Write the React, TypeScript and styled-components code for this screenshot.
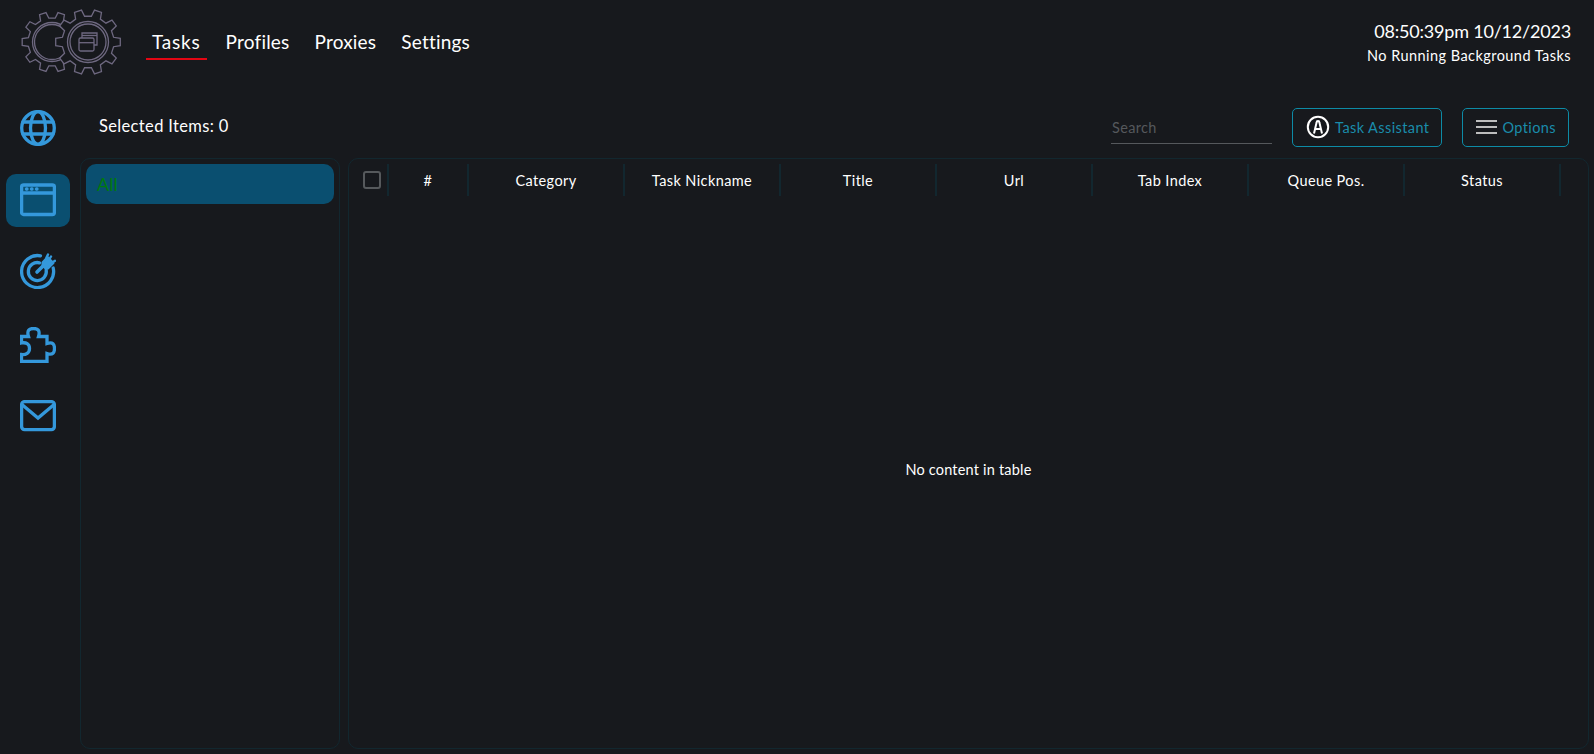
import styled, { createGlobalStyle } from "styled-components";

const GlobalStyle = createGlobalStyle`
  html, body {
    margin: 0;
    height: 100%;
    overflow: hidden;
    background: #17191d;
  }
  #root {
    height: 100%;
  }
  * {
    box-sizing: border-box;
  }
`;

const gearPath = (cx: number, cy: number, teeth: number, outer: number, inner: number) => {
  const points: string[] = [];
  const step = (Math.PI * 2) / teeth;
  for (let i = 0; i < teeth; i++) {
    const a = (i + 0.5) * step - Math.PI / 2;
    const corners: [number, number][] = [
      [inner, a - step * 0.29],
      [outer, a - step * 0.18],
      [outer, a + step * 0.18],
      [inner, a + step * 0.29],
    ];
    corners.forEach(([r, t]) => {
      points.push(`${(cx + r * Math.cos(t)).toFixed(2)} ${(cy + r * Math.sin(t)).toFixed(2)}`);
    });
  }
  return `M${points.join("L")}Z`;
};

const Logo = () => (
  <svg width="104" height="68" viewBox="0 0 104 68" fill="none" stroke="#6e6880" strokeWidth="1.3">
    <path d={gearPath(31, 34, 10, 30, 24)} />
    <circle cx="31" cy="34" r="19.5" />
    <circle cx="31" cy="34" r="17.5" />
    <path d={gearPath(67, 34, 10, 32.5, 26)} fill="#17191d" />
    <circle cx="67" cy="34" r="20.5" />
    <circle cx="67" cy="34" r="18" />
    <rect x="58" y="30" width="15" height="13" rx="1.5" />
    <path d="M58 34.7H73" />
    <path d="M61 30V25H76V37H73" />
    <path d="M61 27.5H76" />
  </svg>
);

const SideIcon = styled.svg.attrs({
  width: 36,
  height: 36,
  viewBox: "0 0 36 36",
  fill: "none",
})`
  stroke: #3498db;
  stroke-width: 3.3;
  stroke-linejoin: round;
  stroke-linecap: round;
`;

const GlobeIcon = () => (
  <SideIcon>
    <circle cx="18" cy="18" r="16.3" />
    <ellipse cx="18" cy="18" rx="7.5" ry="16.3" />
    <path d="M3 12H33M3 24H33" />
  </SideIcon>
);

const BrowserIcon = () => (
  <SideIcon>
    <rect x="1.6" y="2" width="32.8" height="29.5" rx="2" />
    <path d="M2 10H34" />
    <path d="M6.5 6H7M11.5 6H12M16.5 6H17" />
  </SideIcon>
);

const TargetIcon = () => (
  <SideIcon>
    <path d="M20.5 2.8A16 16 0 1 0 33.2 15" />
    <path d="M19.5 9.8A9 9 0 1 0 26.2 17" />
    <path d="M17 19L24.5 11.5" strokeWidth="3.6" />
    <path
      d="M22.5 9.5L27.5 4L33.5 10L28 15.5H25.5L22.5 12.5Z"
      fill="#3498db"
      strokeWidth="2"
    />
    <path d="M26.5 4.5L28 1.5M31 3.5L29.5 6M33 9L35 7.8" strokeWidth="2.4" />
  </SideIcon>
);

const PuzzleIcon = () => (
  <SideIcon>
    <path
      d="M1.5 9.5H8.5C6.5 3 9.5 1.5 13.5 1.5C17.5 1.5 20.5 3 18.5 9.5H27V16.5C33 14.5 34.5 17.5 34.5 21.5C34.5 25.5 33 28.5 27 26.5V34.5H1.5V27.5C6 28 9.5 26 9.5 21.5C9.5 17 6 15 1.5 16Z"
      strokeLinejoin="miter"
    />
  </SideIcon>
);

const MailIcon = () => (
  <SideIcon>
    <rect x="1.6" y="1.6" width="32.8" height="28" rx="3" />
    <path d="M2.5 5L18 18L33.5 5" strokeLinejoin="miter" />
  </SideIcon>
);

const AssistantIcon = () => (
  <svg width="24" height="24" viewBox="0 0 24 24" fill="none" stroke="#fff" strokeWidth="2">
    <circle cx="12" cy="12" r="10.2" />
    <path d="M8 18.5L10.6 7.5a1.4 1.4 0 0 1 2.8 0L16 18.5M9 14H15" />
  </svg>
);

const MenuIcon = () => (
  <svg width="21" height="16" viewBox="0 0 21 16" stroke="#bdbdbd" strokeWidth="2.2">
    <path d="M0 2H21M0 8H21M0 14H21" />
  </svg>
);

const Page = styled.div`
  height: 100%;
  display: flex;
  flex-direction: column;
  background: #17191d;
  color: #fff;
  font-family: Lato, "Open Sans", sans-serif;
`;

const Header = styled.header`
  height: 90px;
  flex: none;
  display: flex;
  align-items: flex-start;
  padding: 8px 23px 0 21px;
`;

const Nav = styled.nav`
  display: flex;
  gap: 13px;
  margin: 21px 0 0 21px;
`;

const NavLink = styled.a<{ $active?: boolean }>`
  padding: 0 6px 3px;
  font-size: 19px;
  line-height: 26px;
  letter-spacing: ${(p) => (p.$active ? "0.8px" : "0.2px")};
  color: #fff;
  border-bottom: 2px solid ${(p) => (p.$active ? "#e30613" : "transparent")};
`;

const Clock = styled.div`
  margin-left: auto;
  padding-top: 12px;
  text-align: right;
`;

const Time = styled.div`
  font-size: 18px;
  line-height: 22px;
  letter-spacing: -0.2px;
`;

const Background = styled.div`
  font-size: 14.5px;
  line-height: 20px;
  margin-top: 4px;
  letter-spacing: 0.45px;
`;

const Body = styled.div`
  flex: 1;
  min-height: 0;
  display: flex;
  padding-bottom: 5px;
`;

const Sidebar = styled.aside`
  width: 80px;
  flex: none;
  display: flex;
  flex-direction: column;
  align-items: flex-start;
  padding: 11px 0 0 6px;
`;

const SideButton = styled.div<{ $active?: boolean; $gap: number }>`
  width: 64px;
  height: 53px;
  margin-bottom: ${(p) => p.$gap}px;
  display: flex;
  align-items: center;
  justify-content: center;
  border-radius: 10px;
  background: ${(p) => (p.$active ? "#0a4f70" : "transparent")};
`;

const Main = styled.main`
  flex: 1;
  min-width: 0;
  display: flex;
  flex-direction: column;
  padding-right: 5px;
`;

const Toolbar = styled.div`
  height: 68px;
  flex: none;
  display: flex;
  align-items: center;
  padding: 6px 20px 0 19px;
`;

const Selected = styled.div`
  font-size: 16.5px;
  letter-spacing: 0.35px;
  margin-top: -2px;
`;

const Search = styled.input`
  width: 161px;
  height: 30px;
  margin: 4px 0 0 auto;
  padding: 0 1px 2px;
  background: none;
  border: 0;
  border-bottom: 1px solid #55585c;
  color: #fff;
  font: 14.5px Lato, sans-serif;
  letter-spacing: 0.3px;
  outline: none;

  &::placeholder {
    color: #55585c;
    opacity: 1;
  }
`;

const ToolButton = styled.div<{ $inset: number; $space: number }>`
  height: 39px;
  margin-left: ${(p) => p.$space}px;
  display: flex;
  align-items: center;
  gap: 5px;
  padding: 0 12px 0 ${(p) => p.$inset}px;
  border: 1px solid #0d8ba6;
  border-radius: 5px;
  color: #1a8cab;
  font-size: 14.5px;
  letter-spacing: 0.4px;
`;

const Panels = styled.div`
  flex: 1;
  min-height: 0;
  display: flex;
  gap: 8px;
`;

const Panel = styled.section`
  border: 1px solid #12272f;
  border-radius: 10px;
`;

const Categories = styled(Panel)`
  width: 260px;
  flex: none;
  padding: 5px;
`;

const CategoryItem = styled.div`
  height: 40px;
  display: flex;
  align-items: center;
  padding: 0 11px;
  border-radius: 10px;
  background: #0a4f70;
  color: #007a0e;
  font-size: 18px;
`;

const TablePanel = styled(Panel)`
  flex: 1;
  min-width: 0;
  display: flex;
  flex-direction: column;
`;

const TableHead = styled.div`
  flex: none;
  display: grid;
  grid-template-columns: 40px 80px repeat(7, 156px);
  margin-top: 5px;
`;

const HeadCell = styled.div`
  height: 32px;
  display: flex;
  align-items: center;
  justify-content: center;
  border-right: 2px solid #12272f;
  font-size: 14.5px;
  letter-spacing: 0.4px;
`;

const CheckBox = styled.span`
  width: 18px;
  height: 18px;
  margin-left: 7px;
  border: 2px solid #56595c;
  border-radius: 3px;
`;

const EmptyRow = styled.div`
  flex: 1;
  display: flex;
  align-items: center;
  justify-content: center;
  padding-bottom: 5px;
  font-size: 14.5px;
  letter-spacing: 0.2px;
`;

const columns = ["#", "Category", "Task Nickname", "Title", "Url", "Tab Index", "Queue Pos.", "Status"];

const App = () => {
  return (
    <Page>
      <GlobalStyle />
      <Header>
        <Logo />
        <Nav>
          <NavLink $active>Tasks</NavLink>
          <NavLink>Profiles</NavLink>
          <NavLink>Proxies</NavLink>
          <NavLink>Settings</NavLink>
        </Nav>
        <Clock>
          <Time>08:50:39pm 10/12/2023</Time>
          <Background>No Running Background Tasks</Background>
        </Clock>
      </Header>
      <Body>
        <Sidebar>
          <SideButton $gap={20}><GlobeIcon /></SideButton>
          <SideButton $active $gap={17}><BrowserIcon /></SideButton>
          <SideButton $gap={21}><TargetIcon /></SideButton>
          <SideButton $gap={20}><PuzzleIcon /></SideButton>
          <SideButton $gap={0}><MailIcon /></SideButton>
        </Sidebar>
        <Main>
          <Toolbar>
            <Selected>Selected Items: 0</Selected>
            <Search placeholder="Search" />
            <ToolButton $inset={13} $space={20}><AssistantIcon />Task Assistant</ToolButton>
            <ToolButton $inset={13} $space={20}><MenuIcon />Options</ToolButton>
          </Toolbar>
          <Panels>
            <Categories>
              <CategoryItem>All</CategoryItem>
            </Categories>
            <TablePanel>
              <TableHead>
                <HeadCell><CheckBox /></HeadCell>
                {columns.map((name) => (
                  <HeadCell key={name}>{name}</HeadCell>
                ))}
              </TableHead>
              <EmptyRow>No content in table</EmptyRow>
            </TablePanel>
          </Panels>
        </Main>
      </Body>
    </Page>
  );
};

export default App;
